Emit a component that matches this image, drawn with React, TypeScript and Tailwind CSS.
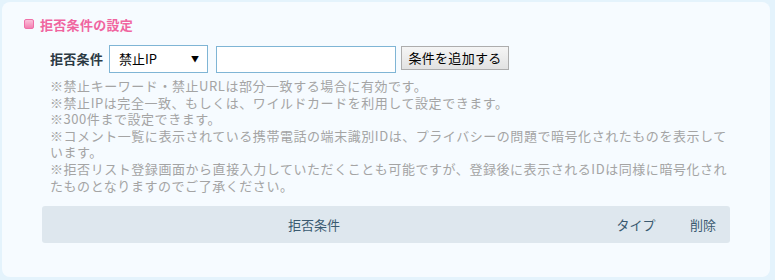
import React from "react";

const font = { fontFamily: '"Noto Sans CJK JP", "Noto Sans", sans-serif' };

export default function App() {
  return (
    <div className="w-[775px] h-[280px] bg-[#e4f3fc] pt-[2px] pl-[2px]" style={font}>
      <div className="w-[768px] h-[275px] bg-[#f6fbff] rounded-[8px] pt-[12px] pl-[22px]">
        <div className="flex items-center h-[20px]">
          <div className="w-[10px] h-[10px] rounded-[2px] border border-[#f070a8] bg-gradient-to-b from-[#fbc0da] to-[#f27fb2]" />
          <span className="ml-[6px] text-[13px] font-bold text-[#f0659f] leading-none tracking-[0.3px]">拒否条件の設定</span>
        </div>
        <div className="flex items-center mt-[11px] ml-[26px] h-[28px]">
          <span className="text-[13px] font-bold text-[#2c3a44] w-[59px] tracking-[0.3px]">拒否条件</span>
          <div className="w-[99px] h-[28px] border border-[#7fb5d5] bg-white flex items-center justify-between pl-[9px] pr-[8px] text-[13px] text-black">
            <span>禁止IP</span>
            <span className="text-[8px]">▼</span>
          </div>
          <div className="ml-[8px] w-[180px] h-[27px] border border-[#7fb5d5] bg-white" />
          <div className="ml-[5px] w-[108px] h-[24px] border border-[#adadad] bg-gradient-to-b from-[#f5f5f5] to-[#e2e2e2] text-[13px] text-black flex items-center justify-center self-start mt-[1px] tracking-[0.3px]">
            条件を追加する
          </div>
        </div>
        <div className="mt-[5px] ml-[26px] w-[700px] text-[13px] leading-[16.6px] text-[#a4a4a4] tracking-[0.55px] whitespace-nowrap">
          <p>※禁止キーワード・禁止URLは部分一致する場合に有効です。</p>
          <p>※禁止IPは完全一致、もしくは、ワイルドカードを利用して設定できます。</p>
          <p>※300件まで設定できます。</p>
          <p>※コメント一覧に表示されている携帯電話の端末識別IDは、プライバシーの問題で暗号化されたものを表示して<br />います。</p>
          <p>※拒否リスト登録画面から直接入力していただくことも可能ですが、登録後に表示されるIDは同様に暗号化され<br />たものとなりますのでご了承ください。</p>
        </div>
        <div className="mt-[12px] ml-[18px] w-[688px] h-[37px] rounded-[3px] bg-[#dee7ee] flex items-center text-[13px] text-[#3a5a70]">
          <div className="w-[544px] text-center">拒否条件</div>
          <div className="w-[100px] text-center">タイプ</div>
          <div className="w-[34px] text-center">削除</div>
        </div>
      </div>
    </div>
  );
}
